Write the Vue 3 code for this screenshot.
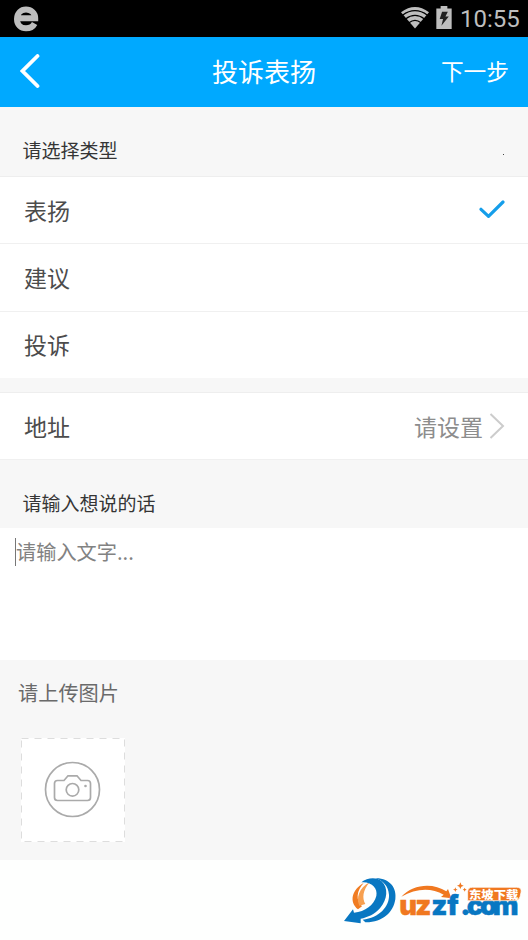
<script setup>
import { ref } from 'vue'

const types = ['表扬', '建议', '投诉']
const selected = ref('表扬')
</script>

<template>
  <main class="screen">
    <header class="status">
      <svg class="browser" viewBox="0 0 26 26">
        <path d="M4 13C4 7 8 3.500 13 3.500S22.200 7 22.200 12.200H5M4 13c0 6 4 9.300 9 9.300 4.200 0 7-1.700 8.600-4.800" />
      </svg>
      <div class="indicators">
        <svg class="wifi" viewBox="0 0 28 22">
          <path class="fan" d="M0 5.200Q14-5.200 28 5.200L14 21.500Z" />
          <path class="gap" d="M1.500 8.200Q14-.8 26.500 8.200M4.500 12Q14 4.800 23.500 12M8 15.700Q14 11 20 15.700" />
        </svg>
        <svg class="battery" viewBox="0 0 16 24">
          <path d="M4.500 0h7v2.500H16V24H0V2.500h4.500z" fill="#bebebe" />
          <path d="M6 6h6L9.500 11H13L5.300 20.500 7 13.500H3.500z" fill="#222" />
        </svg>
        <span class="clock">10:55</span>
      </div>
    </header>

    <nav class="bar">
      <svg class="back" viewBox="0 0 20 34"><path d="M17.500 2 2.500 17l15 15" /></svg>
      <h1>投诉表扬</h1>
      <span class="next">下一步</span>
    </nav>

    <h2 class="label first"><span>请选择类型</span><i class="speck"></i></h2>
    <ul class="list">
      <li v-for="t in types" :key="t" class="row" @click="selected = t">
        <span>{{ t }}</span>
        <svg v-if="selected === t" class="check" viewBox="0 0 26 20"><path d="M2 9.300 9.500 16.300 24 2" /></svg>
      </li>
    </ul>

    <section class="row address">
      <span>地址</span>
      <span class="value">请设置<svg class="chevron" viewBox="0 0 16 26"><path d="M1.500 1 14 13 1.500 25" /></svg></span>
    </section>

    <h2 class="label second">请输入想说的话</h2>
    <section class="editor"><i class="caret"></i><span>请输入文字...</span></section>

    <section class="upload">
      <p>请上传图片</p>
      <div class="photo">
        <svg viewBox="0 0 104 104">
          <rect class="dash" x=".5" y=".5" width="103" height="103" />
          <circle cx="51.500" cy="51.500" r="27" />
          <path d="M36.500 42.500H43l4-4.700h9l4 4.700h6.500q3 0 3 3v14q0 3-3 3h-30q-3 0-3-3v-14q0-3 3-3z" />
          <circle cx="51.500" cy="51.800" r="6.300" />
          <circle class="dot" cx="64.500" cy="48" r="1.300" />
        </svg>
      </div>
    </section>

    <footer class="foot">
      <svg class="mark" viewBox="0 0 594 240">
        <path d="M84 148C56 126 66 88 101 69 80 92 76 120 96 139z" fill="#f07c22" />
        <path d="M88 137C78 116 86 84 119 67 98 91 96 115 106 132z" fill="#f7a050" />
        <path d="M136 55C181 54 201 86 196 118 190 157 158 188 106 187L98 179C148 173 179 139 177 104 175 79 160 62 136 55z" fill="#0877c2" />
        <path d="M94 67C112 52 141 51 155 64 176 84 172 119 151 143 135 162 113 172 92 176V190L42 183 69 148 72 158C106 155 132 135 139 108 144 85 125 64 94 67z" fill="#0877c2" />
        <path d="M214 110C248 72 309 67 349 94L354 87 364 115 333 111 341 104C303 82 257 85 214 110z" fill="#f07820" />
        <text class="word" x="208 256 304 352 391 410 450 488" y="164"><tspan class="warm">uz</tspan><tspan>zf.com</tspan></text>
        <path d="M427 82H560Q576 82 573 97L570 110Q567 122 553 122H413V95Q414 82 427 82z" fill="#f07820" stroke="#fff" stroke-width="2" />
        <path d="M402 149 419 157 402 165z" fill="#0877c2" />
        <text class="badge" x="417" y="116" textLength="148" lengthAdjust="spacingAndGlyphs">东坡下载</text>
        <path d="M391 67l3 7 7 3-7 3-3 7-3-7-7-3 7-3zM376 82l2 5 5 2-5 2-2 5-2-5-5-2 5-2zM404 83l2 4 4 2-4 2-2 4-2-4-4-2 4-2z" fill="#f07820" />
      </svg>
    </footer>
  </main>
</template>

<style>
body { background: #fff; }
</style>

<style scoped>
* { box-sizing: border-box; }
.screen {
  width: 528px;
  height: 940px;
  display: flex;
  flex-direction: column;
  overflow: hidden;
  background: #f7f7f7;
  color: #4c4c4c;
  font-family: "Noto Sans CJK SC", sans-serif;
}
h1, h2, p, ul { margin: 0; padding: 0; font-weight: 400; }
svg { display: block; flex: none; fill: none; }
.status { height: 37px; background: #000; display: flex; justify-content: space-between; padding: 6px 9px 0 13px; flex: none; }
.browser { width: 26px; height: 26px; stroke: #bebebe; stroke-width: 6; }
.indicators { display: flex; }
.wifi { width: 28px; height: 22px; margin-top: 1px; }
.fan { fill: #bebebe; }
.gap { stroke: #000; stroke-width: 1.300; }
.battery { width: 16px; height: 23px; margin: 0 0 0 7px; }
.clock { font: 24px/27px Roboto, sans-serif; color: #bebebe; margin-left: 8px; width: 59px; white-space: nowrap; }
.bar { height: 70px; flex: none; background: #00a9ff; color: #fff; display: grid; grid-template-columns: 1fr auto 1fr; align-items: center; padding: 0 19px 2px 20px; }
.back { width: 20px; height: 34px; stroke: #fff; stroke-width: 3.800; stroke-linecap: round; }
.bar h1 { font-size: 26px; line-height: 38px; margin-left: -1px; }
.next { justify-self: end; font-size: 22.700px; line-height: 34px; }
.label { font-size: 19px; line-height: 28px; color: #353535; padding-left: 22.500px; flex: none; }
.first { height: 69px; padding-top: 29px; padding-right: 24px; display: flex; justify-content: space-between; }
.speck { width: 1px; height: 1px; background: #444; margin-top: 18px; }
.list { list-style: none; flex: none; border-top: 1px solid #eee; }
.row { height: 67px; background: #fff; display: flex; align-items: center; justify-content: space-between; padding: 0 23px 1px 24px; font-size: 23px; line-height: 34px; flex: none; }
.list .row + .row { border-top: 1px solid #f0f0f0; height: 67.500px; }
.list .row:first-child { height: 66px; }
.check { width: 26px; height: 20px; stroke: #159eea; stroke-width: 3.200; stroke-linecap: round; stroke-linejoin: round; }
.address { margin-top: 14px; height: 68px; border-top: 1px solid #eee; border-bottom: 1px solid #f0f0f0; }
.value { display: flex; align-items: center; color: #8d8d8d; }
.chevron { width: 16px; height: 26px; margin-left: 6px; stroke: #ccc; stroke-width: 2; }
.second { height: 68px; padding-top: 29px; }
.editor { height: 132px; background: #fff; flex: none; display: flex; padding: 9px 15px; font-size: 20.200px; line-height: 30px; color: #828282; }
.caret { width: 1px; height: 28px; background: #777; margin-top: 1px; }
.upload { height: 200px; flex: none; padding: 18px 18px 0; }
.upload p { font-size: 20.200px; line-height: 30px; color: #6a6a6a; }
.photo { width: 104px; height: 104px; background: #fff; margin: 30px 0 0 3px; }
.photo svg { width: 104px; height: 104px; stroke: #aaa; stroke-width: 1.700; }
.photo .dash { stroke: #ddd; stroke-width: 1; stroke-dasharray: 7 6; }
.photo .dot { fill: #aaa; stroke: none; }
.foot { height: 80px; background: #fefffe; display: flex; justify-content: flex-end; flex: none; }
.mark { width: 198px; height: 80px; }
.word { font: 900 82px Inter, sans-serif; fill: #0877c2; stroke: #0877c2; stroke-width: 1; }
.warm { fill: #f07820; stroke: #f07820; }
.badge { font: 900 34px "Noto Sans CJK SC", sans-serif; fill: #fff; }
</style>
